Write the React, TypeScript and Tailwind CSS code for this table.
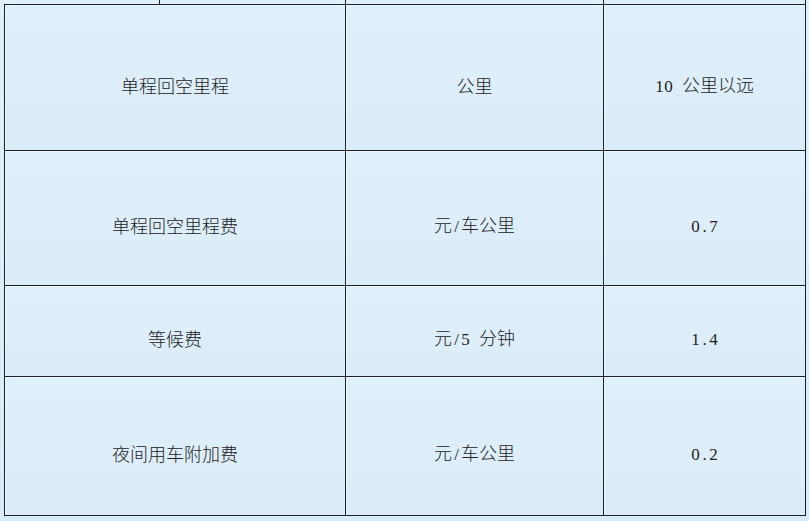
const rows = [
  { h: 'h-[146px]', cells: ['单程回空里程', '公里', '10 公里以远'] },
  { h: 'h-[135px]', cells: ['单程回空里程费', '元/车公里', '0.7'] },
  { h: 'h-[91px]', cells: ['等候费', '元/5 分钟', '1.4'] },
  { h: 'h-[139px]', cells: ['夜间用车附加费', '元/车公里', '0.2'] },
];

const widths = ['w-[341px]', 'w-[258px]', 'w-[202px]'];

// half-width characters get a fixed 9px slot, like the original's SimSun
function CellText({ text }: { text: string }) {
  return (
    <span className="whitespace-nowrap">
      {Array.from(text).map((ch, i) =>
        ch.charCodeAt(0) < 128 ? (
          <span
            key={i}
            className="inline-block w-[9px] text-center font-['Liberation_Serif',serif] text-[17px]"
          >
            {ch === ' ' ? '' : ch}
          </span>
        ) : (
          <span key={i}>{ch}</span>
        )
      )}
    </span>
  );
}

export default function App() {
  return (
    <div className="w-[809px] h-[521px] overflow-hidden bg-linear-to-b from-[#e0f0fb] to-[#d9ebf8] font-['Noto_Sans_CJK_SC',sans-serif] text-[18px] font-light text-[#222]">
      {/* tail of the previous table */}
      <div className="flex h-[4px] ml-[5px]">
        <div className="w-[154px]" />
        <div className="w-[187px] border-l border-r border-[#18212e]" />
        <div className="w-[258px] border-r border-[#18212e]" />
        <div className="w-[202px] border-r border-[#18212e]" />
      </div>

      <div className="ml-[4px] w-[802px] border-l border-t border-[#18212e]">
        {rows.map((row, r) => (
          <div key={r} className={`flex ${row.h}`}>
            {row.cells.map((c, i) => (
              <div
                key={i}
                className={`${widths[i]} flex items-center justify-center pt-[15px] border-r border-b border-[#18212e] bg-linear-to-b from-[#e0f0fb] to-[#dbecf8] shadow-[inset_1px_1px_0_#eef7fd]`}
              >
                <CellText text={c} />
              </div>
            ))}
          </div>
        ))}
      </div>
    </div>
  );
}
